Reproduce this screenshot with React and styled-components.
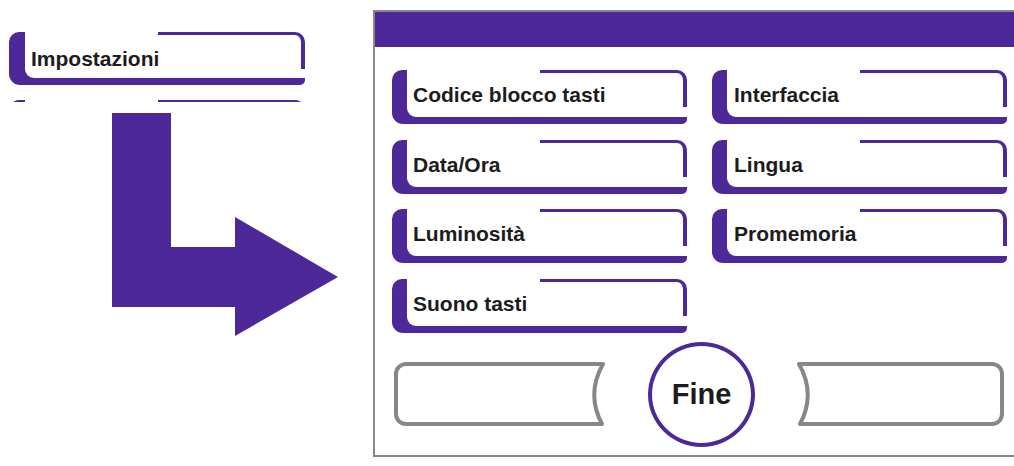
import React from "react";
import styled, { createGlobalStyle } from "styled-components";

const PURPLE = "#4c2898";
const GRAY = "#878787";

const Global = createGlobalStyle`
  html, body { margin: 0; padding: 0; background: #fff; }
  body { font-family: "Liberation Sans", Arial, sans-serif; color: #1c1c1c; }
`;

const Page = styled.div`
  width: 1014px;
  height: 466px;
  display: flex;
  overflow: hidden;
  background: #fff;
`;

const LeftColumn = styled.div`
  width: 373px;
  flex: none;
  display: flex;
  flex-direction: column;
`;

const MenuClip = styled.div`
  margin-top: 32px;
  margin-left: 9px;
  width: 296px;
  height: 70px;
  overflow: hidden;
  display: flex;
  flex-direction: column;
  gap: 15px;
`;

const Tile = styled.div`
  position: relative;
  flex: none;
  box-sizing: border-box;
  width: ${(p) => p.$w}px;
  height: ${(p) => p.$h}px;
  background: ${PURPLE};
  border-radius: 10px 0 5px 11px;
  display: flex;
  align-items: center;
  padding-left: ${(p) => p.$pl}px;
  padding-bottom: ${(p) => p.$pb}px;
  font-weight: bold;
  font-size: 21px;
  color: #1c1c1c;

  &::before {
    content: "";
    position: absolute;
    left: ${(p) => p.$bar}px;
    top: 0;
    right: 0;
    bottom: 7px;
    background: #fff;
    border-bottom-left-radius: 9px;
  }

  &::after {
    content: "";
    position: absolute;
    top: 0;
    right: 0;
    width: 147px;
    height: 37px;
    box-sizing: border-box;
    border-top: 3px solid ${PURPLE};
    border-right: 4px solid ${PURPLE};
    border-top-right-radius: 10px;
  }
`;

const TileLabel = styled.span`
  position: relative;
  z-index: 1;
  white-space: nowrap;
`;

const ArrowSvg = styled.svg`
  display: block;
  margin-top: 11px;
  margin-left: 112px;
`;

const Panel = styled.div`
  flex: 1;
  margin-top: 10px;
  height: 447px;
  box-sizing: border-box;
  border-top: 2px solid ${GRAY};
  border-left: 2px solid ${GRAY};
  border-bottom: 2px solid ${GRAY};
  display: flex;
  flex-direction: column;
`;

const Header = styled.div`
  height: 35px;
  background: ${PURPLE};
  flex: none;
`;

const Grid = styled.div`
  margin-top: 23px;
  margin-left: 17px;
  display: grid;
  grid-template-columns: 295px 295px;
  grid-auto-rows: 54px;
  column-gap: 25px;
  row-gap: 15.67px;
`;

const Footer = styled.div`
  margin-top: 9px;
  height: 105px;
  padding-left: 19px;
  display: flex;
  align-items: center;
  gap: 42px;
`;

const SideButton = styled.svg`
  display: block;
  flex: none;
`;

const FineButton = styled.div`
  width: 107px;
  height: 105px;
  box-sizing: border-box;
  border: 4px solid ${PURPLE};
  border-radius: 50%;
  display: flex;
  align-items: center;
  justify-content: center;
  font-weight: bold;
  font-size: 29px;
  color: #1c1c1c;
  flex: none;
`;

const items = [
  ["Codice blocco tasti", "Interfaccia"],
  ["Data/Ora", "Lingua"],
  ["Luminosità", "Promemoria"],
  ["Suono tasti", null],
];

export default function App() {
  return (
    <>
      <Global />
      <Page>
        <LeftColumn>
          <MenuClip>
            <Tile $w={296} $h={53} $pl={22} $pb={0} $bar={16}>
              <TileLabel>Impostazioni</TileLabel>
            </Tile>
            <Tile $w={296} $h={53} $pl={22} $pb={0} $bar={16} />
          </MenuClip>
          <ArrowSvg width="228" height="225" viewBox="0 0 228 225">
            <polygon
              points="0,0 59,0 59,134 123,134 123,104 226,164 123,223 123,194 0,194"
              fill={PURPLE}
            />
          </ArrowSvg>
        </LeftColumn>
        <Panel>
          <Header />
          <Grid>
            {items.flatMap(([a, b], i) => [
              <Tile key={"a" + i} $w={295} $h={54} $pl={21} $pb={4} $bar={15}>
                <TileLabel>{a}</TileLabel>
              </Tile>,
              b ? (
                <Tile key={"b" + i} $w={295} $h={54} $pl={22} $pb={4} $bar={15}>
                  <TileLabel>{b}</TileLabel>
                </Tile>
              ) : null,
            ])}
          </Grid>
          <Footer>
            <SideButton width="212" height="64" viewBox="0 0 212 64">
              <path
                d="M209 2 L12 2 A10 10 0 0 0 2 12 L2 52 A10 10 0 0 0 12 62 L208 62 Q192 32 209 2 Z"
                fill="#fff"
                stroke={GRAY}
                strokeWidth="4"
                strokeLinejoin="round"
              />
            </SideButton>
            <FineButton>Fine</FineButton>
            <SideButton width="208" height="64" viewBox="0 0 208 64">
              <path
                d="M2 2 L195 2 A10 10 0 0 1 205 12 L205 52 A10 10 0 0 1 195 62 L3 62 Q19 32 2 2 Z"
                fill="#fff"
                stroke={GRAY}
                strokeWidth="4"
                strokeLinejoin="round"
              />
            </SideButton>
          </Footer>
        </Panel>
      </Page>
    </>
  );
}
